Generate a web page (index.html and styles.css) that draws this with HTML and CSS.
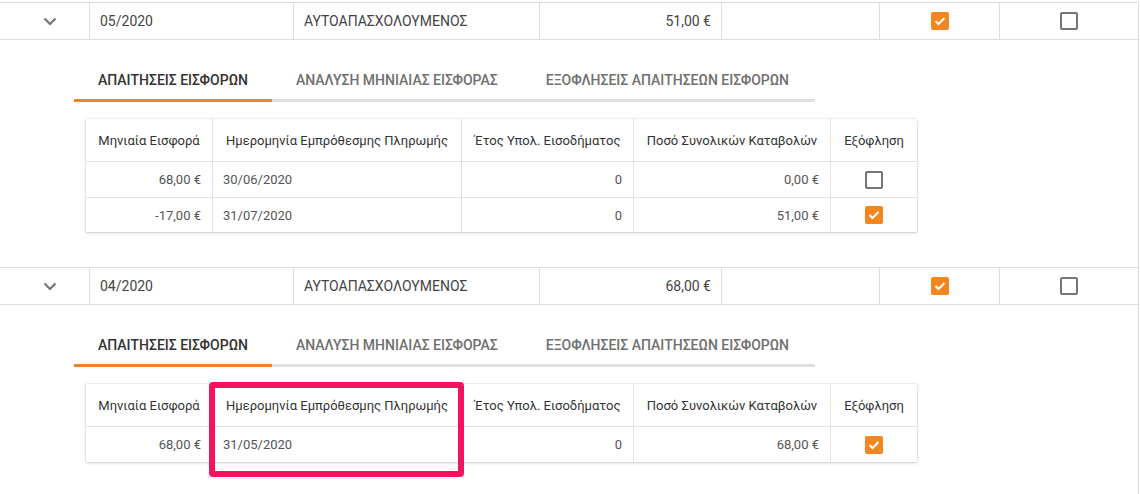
FILE: index.html
```html
<!DOCTYPE html>
<html lang="el">
<head>
<meta charset="utf-8">
<title>Εισφορές</title>
<link rel="stylesheet" href="styles.css">
</head>
<body>
<div class="grid">
  <div class="row">
    <div class="cell expand"><svg class="chev" width="14" height="9" viewBox="0 0 14 9"><path d="M1.5 1.5 L7 7 L12.5 1.5" fill="none" stroke="#757575" stroke-width="2.2"/></svg></div>
    <div class="cell">05/2020</div>
    <div class="cell">ΑΥΤΟΑΠΑΣΧΟΛΟΥΜΕΝΟΣ</div>
    <div class="cell num">51,00 €</div>
    <div class="cell"></div>
    <div class="cell center"><span class="cb on"><svg width="12" height="10" viewBox="0 0 12 10"><path d="M1.5 5 L4.5 8 L10.5 2" fill="none" stroke="#fff" stroke-width="2"/></svg></span></div>
    <div class="cell center last"><span class="cb"></span></div>
  </div>
  <div class="detail">
    <div class="tabs">
      <div class="tab active">ΑΠΑΙΤΗΣΕΙΣ ΕΙΣΦΟΡΩΝ</div>
      <div class="tab">ΑΝΑΛΥΣΗ ΜΗΝΙΑΙΑΣ ΕΙΣΦΟΡΑΣ</div>
      <div class="tab">ΕΞΟΦΛΗΣΕΙΣ ΑΠΑΙΤΗΣΕΩΝ ΕΙΣΦΟΡΩΝ</div>
    </div>
    <div class="card">
      <div class="trow head">
        <div class="tc">Μηνιαία Εισφορά</div>
        <div class="tc">Ημερομηνία Εμπρόθεσμης Πληρωμής</div>
        <div class="tc">Έτος Υπολ. Εισοδήματος</div>
        <div class="tc">Ποσό Συνολικών Καταβολών</div>
        <div class="tc">Εξόφληση</div>
      </div>
      <div class="trow">
        <div class="tc r">68,00 €</div>
        <div class="tc l">30/06/2020</div>
        <div class="tc r">0</div>
        <div class="tc r">0,00 €</div>
        <div class="tc c"><span class="cb"></span></div>
      </div>
      <div class="trow">
        <div class="tc r">-17,00 €</div>
        <div class="tc l">31/07/2020</div>
        <div class="tc r">0</div>
        <div class="tc r">51,00 €</div>
        <div class="tc c"><span class="cb on"><svg width="12" height="10" viewBox="0 0 12 10"><path d="M1.5 5 L4.5 8 L10.5 2" fill="none" stroke="#fff" stroke-width="2"/></svg></span></div>
      </div>
    </div>
  </div>
  <div class="row">
    <div class="cell expand"><svg class="chev" width="14" height="9" viewBox="0 0 14 9"><path d="M1.5 1.5 L7 7 L12.5 1.5" fill="none" stroke="#757575" stroke-width="2.2"/></svg></div>
    <div class="cell">04/2020</div>
    <div class="cell">ΑΥΤΟΑΠΑΣΧΟΛΟΥΜΕΝΟΣ</div>
    <div class="cell num">68,00 €</div>
    <div class="cell"></div>
    <div class="cell center"><span class="cb on"><svg width="12" height="10" viewBox="0 0 12 10"><path d="M1.5 5 L4.5 8 L10.5 2" fill="none" stroke="#fff" stroke-width="2"/></svg></span></div>
    <div class="cell center last"><span class="cb"></span></div>
  </div>
  <div class="detail">
    <div class="tabs">
      <div class="tab active">ΑΠΑΙΤΗΣΕΙΣ ΕΙΣΦΟΡΩΝ</div>
      <div class="tab">ΑΝΑΛΥΣΗ ΜΗΝΙΑΙΑΣ ΕΙΣΦΟΡΑΣ</div>
      <div class="tab">ΕΞΟΦΛΗΣΕΙΣ ΑΠΑΙΤΗΣΕΩΝ ΕΙΣΦΟΡΩΝ</div>
    </div>
    <div class="card">
      <div class="trow head">
        <div class="tc">Μηνιαία Εισφορά</div>
        <div class="tc">Ημερομηνία Εμπρόθεσμης Πληρωμής</div>
        <div class="tc">Έτος Υπολ. Εισοδήματος</div>
        <div class="tc">Ποσό Συνολικών Καταβολών</div>
        <div class="tc">Εξόφληση</div>
      </div>
      <div class="trow">
        <div class="tc r">68,00 €</div>
        <div class="tc l">31/05/2020</div>
        <div class="tc r">0</div>
        <div class="tc r">68,00 €</div>
        <div class="tc c"><span class="cb on"><svg width="12" height="10" viewBox="0 0 12 10"><path d="M1.5 5 L4.5 8 L10.5 2" fill="none" stroke="#fff" stroke-width="2"/></svg></span></div>
      </div>
      <div class="highlight"></div>
    </div>
  </div>
</div>
</body>
</html>
```
FILE: styles.css
```css
* { box-sizing: border-box; }
html, body { margin: 0; padding: 0; background: #fff; }
body {
  font-family: Roboto, "Noto Sans", "Liberation Sans", sans-serif;
  font-size: 14px;
  color: #333;
  height: 494px;
  overflow: hidden;
}
.grid {
  width: 1139px;
  margin-top: 2px;
  border-right: 1px solid #dedede;
  min-height: 492px;
}
.row {
  display: grid;
  grid-template-columns: 90px 204px 246px 182px 158px 120px 138px;
  height: 38px;
  border-top: 1px solid #dedede;
  border-bottom: 1px solid #dedede;
}
.cell {
  display: flex;
  align-items: center;
  padding: 0 10px;
  border-right: 1px solid #dedede;
  color: #444;
  white-space: nowrap;
}
.cell.last { border-right: none; }
.cell.num { justify-content: flex-end; padding-right: 10px; }
.cell.center { justify-content: center; }
.cell.expand { padding: 0 0 0 43px; }
.chev { display: block; margin-top: 1px; }
.cb {
  display: inline-flex;
  align-items: center;
  justify-content: center;
  width: 18px;
  height: 18px;
  border: 2px solid #757575;
  border-radius: 2px;
  background: #fff;
}
.cb.on {
  border: none;
  background: #f4861f;
}
.detail {
  padding: 21px 0 35px 74px;
}
.tabs {
  display: flex;
  width: 741px;
  border-bottom: 3px solid #e0e0e0;
}
.tab {
  padding: 0 24px;
  line-height: 38px;
  font-weight: 500;
  font-size: 14px;
  color: #6f6f6f;
  margin-bottom: -3px;
  border-bottom: 3px solid transparent;
  white-space: nowrap;
}
.tab.active {
  color: #333;
  border-bottom-color: #ef8326;
}
.card {
  position: relative;
  margin: 17px 0 0 12px;
  width: 831px;
  background: #fff;
  font-size: 13px;
  box-shadow: 0 0 1px rgba(0,0,0,0.25), 0 1px 3px rgba(0,0,0,0.18);
}
.trow {
  display: grid;
  grid-template-columns: 127px 249px 172px 197px 86px;
  height: 36px;
  border-top: 1px solid #e2e2e2;
}
.trow.head {
  height: 42px;
  border-top: none;
}
.trow:last-of-type { height: 35px; }
.tc {
  display: flex;
  align-items: center;
  padding: 0 11px 0 10px;
  border-right: 1px solid #e2e2e2;
  color: #555;
  white-space: nowrap;
}
.tc:last-child { border-right: none; }
.head .tc {
  justify-content: center;
  color: #333;
  padding: 0 6px;
}
.tc.r { justify-content: flex-end; }
.tc.c { justify-content: center; }
.highlight {
  position: absolute;
  left: 123px;
  top: -2px;
  width: 255px;
  height: 95px;
  border: 6px solid #f4135d;
  border-radius: 4px;
  pointer-events: none;
}
```
